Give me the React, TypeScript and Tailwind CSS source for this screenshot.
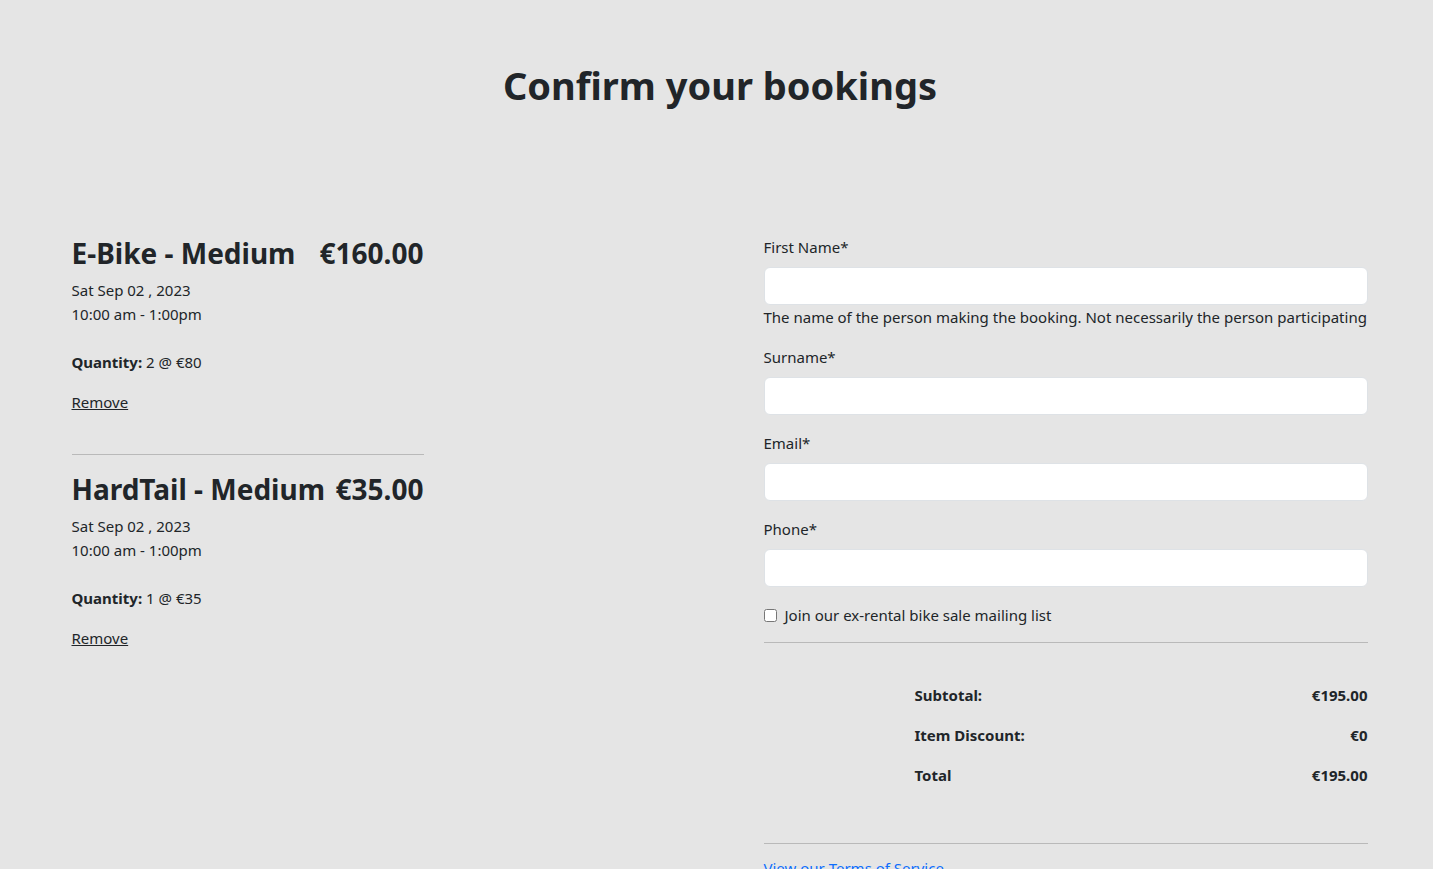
import React from "react";

const items = [
  { name: "E-Bike - Medium", price: "€160.00", qty: "2 @ €80" },
  { name: "HardTail - Medium", price: "€35.00", qty: "1 @ €35" },
];

const fields = [
  { label: "First Name*", help: "The name of the person making the booking. Not necessarily the person participating" },
  { label: "Surname*" },
  { label: "Email*" },
  { label: "Phone*" },
];

const App = () => {
  return (
    <div className="min-h-[869px] bg-[#e5e5e5] text-[#212529] font-['Noto_Sans',sans-serif] text-[15px]">
      <div className="mx-auto w-[1304px] pl-[7px]">
        <h1 className="pt-[58px] text-center text-[38px] font-bold leading-[54px]">
          Confirm your bookings
        </h1>

        <div className="mt-[118px] flex">
          <div className="w-[352px] shrink-0 pt-[5px]">
            {items.map((item, i) => (
              <div key={item.name} className={i > 0 ? "border-t border-[#b9b9b9] pt-[16px]" : ""}>
                <div className="flex justify-between text-[28px] font-bold leading-[36px]">
                  <span>{item.name}</span>
                  <span>{item.price}</span>
                </div>
                <div className="mt-[7px] leading-[24px]">
                  <div>Sat Sep 02 , 2023</div>
                  <div>10:00 am - 1:00pm</div>
                </div>
                <div className="mt-[24px] leading-[24px]">
                  <b>Quantity:</b> {item.qty}
                </div>
                <div className="mt-[16px] mb-[40px] leading-[24px]">
                  <a href="#" className="underline">Remove</a>
                </div>
              </div>
            ))}
          </div>

          <div className="ml-[340px] w-[604px] shrink-0 mt-[5px]">
            {fields.map((f) => (
              <div key={f.label} className="mb-[16px]">
                <label className="block leading-[24px] mb-[8px]">{f.label}</label>
                <input className="block h-[38px] w-full rounded-[6px] border border-[#dee2e6] bg-white px-3" />
                {f.help && <div className="whitespace-nowrap leading-[24px]">{f.help}</div>}
              </div>
            ))}
            <label className="flex items-center gap-[8px] leading-[24px]">
              <input type="checkbox" className="h-[13px] w-[13px]" />
              Join our ex-rental bike sale mailing list
            </label>
            <div className="mt-[15px] border-t border-[#b9b9b9]" />

            <div className="mt-[40px] ml-[151px] font-bold">
              <div className="flex justify-between leading-[24px]">
                <span>Subtotal:</span>
                <span>€195.00</span>
              </div>
              <div className="mt-[16px] flex justify-between leading-[24px]">
                <span>Item Discount:</span>
                <span>€0</span>
              </div>
              <div className="mt-[16px] flex justify-between leading-[24px]">
                <span>Total</span>
                <span>€195.00</span>
              </div>
            </div>
            <div className="mt-[56px] border-t border-[#b9b9b9]" />
            <div className="mt-[12px] leading-[24px]">
              <a href="#" className="text-[#0d6efd] underline">View our Terms of Service</a>
            </div>
          </div>
        </div>
      </div>
    </div>
  );
};

export default App;
